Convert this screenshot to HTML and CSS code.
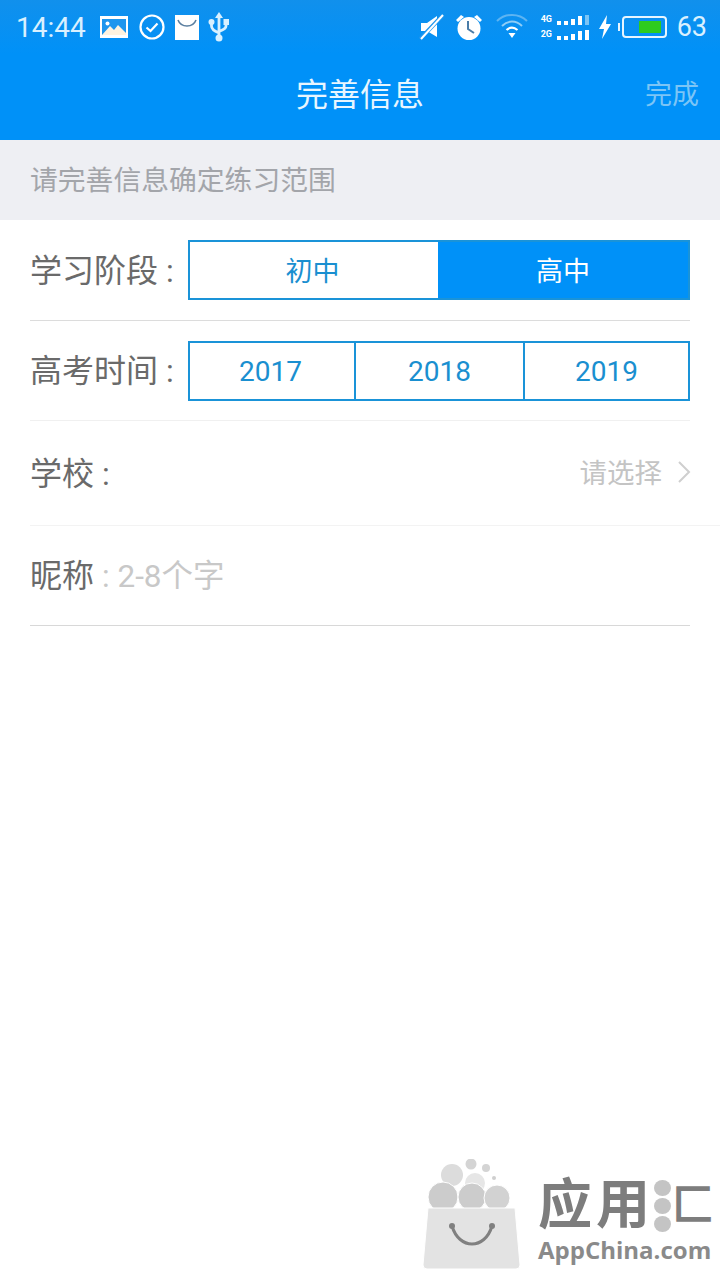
FILE: index.html
```html
<!DOCTYPE html>
<html lang="zh-CN">
<head>
    <meta charset="UTF-8">
    <meta name="viewport" content="width=device-width, initial-scale=1.0">
    <title>完善信息</title>
    <link rel="stylesheet" href="styles.css">
</head>
<body>

<div class="header">
    <!-- Status bar -->
    <div class="statusBar">
        <div class="statusLeft">
            <span class="clock">14:44</span>
            <svg class="iconPicture" width="28" height="22" viewBox="0 0 28 22">
                <rect width="28" height="22" fill="#fff"/>
                <rect x="2" y="3" width="24" height="16" fill="#1e96ee"/>
                <circle cx="7.5" cy="7.5" r="2" fill="#fff"/>
                <path d="M2 19 L10 10 L14 14 L18 9 L26 17 V19 Z" fill="#fff3e0"/>
            </svg>
            <svg class="iconCheck" width="26" height="26" viewBox="0 0 26 26">
                <circle cx="13" cy="13" r="11.5" fill="none" stroke="#fff" stroke-width="2.2"/>
                <path d="M7.5 13.5 L11.5 17 L18.5 9.5" fill="none" stroke="#fff" stroke-width="2.2"/>
            </svg>
            <svg class="iconMail" width="24" height="25" viewBox="0 0 24 25">
                <rect width="24" height="25" fill="#fff"/>
                <path d="M3 5 C6 13 18 13 21 5" fill="none" stroke="#5b7fa0" stroke-width="1.6"/>
            </svg>
            <svg class="iconUsb" width="22" height="30" viewBox="0 0 22 30">
                <path d="M11 0 L15 6 H7 Z" fill="#d8f0ff"/>
                <rect x="15.5" y="7" width="5.500" height="6" fill="#d8f0ff"/>
                <circle cx="3.500" cy="10" r="3" fill="#d8f0ff"/>
                <circle cx="11" cy="26" r="3.500" fill="#d8f0ff"/>
                <path d="M11 5 V25 M3.500 10 V14 Q3.500 18 11 21 M18 12 V14 Q18 17 11 19.500" fill="none" stroke="#d8f0ff" stroke-width="2.800"/>
            </svg>
        </div>
        <div class="statusRight">
            <svg class="iconMute" width="26" height="28" viewBox="0 0 26 28">
                <path d="M2 10 H8 L18 3 V24 L8 18 H2 Z" fill="#fff"/>
                <path d="M1 26 L24 2" stroke="#1e96ee" stroke-width="4"/>
                <path d="M2 26 L24 2" stroke="#fff" stroke-width="2"/>
            </svg>
            <svg class="iconAlarm" width="28" height="28" viewBox="0 0 28 28">
                <circle cx="14" cy="15.500" r="11.500" fill="#fff"/>
                <path d="M1 7 L6 2 L9 4 L3 9 Z M27 7 L22 2 L19 4 L25 9 Z" fill="#fff"/>
                <path d="M13 8 V16 L19 20" fill="none" stroke="#4a7ca8" stroke-width="2"/>
            </svg>
            <svg class="iconWifi" width="32" height="28" viewBox="0 0 32 28">
                <path d="M1 8 C9 0 23 0 31 8" fill="none" stroke="#5db4f2" stroke-width="2"/>
                <path d="M6 13 C12 7 20 7 26 13" fill="none" stroke="#8fcdf6" stroke-width="2"/>
                <path d="M10.500 17 C14 14 18 14 21.500 17" fill="none" stroke="#fff" stroke-width="2.200"/>
                <path d="M12.500 20 H19.500 L16 25 Z" fill="#fff"/>
            </svg>
            <div class="signal">
                <div class="signalRow">
                    <span class="signalLabel">4G</span>
                    <span class="bar bar1"></span><span class="bar bar1"></span><span class="bar bar2"></span><span class="bar bar3"></span><span class="bar bar4 barDim"></span>
                </div>
                <div class="signalRow">
                    <span class="signalLabel">2G</span>
                    <span class="bar bar1"></span><span class="bar bar1"></span><span class="bar bar2"></span><span class="bar bar3"></span><span class="bar bar4"></span>
                </div>
            </div>
            <svg class="iconBolt" width="14" height="24" viewBox="0 0 14 24">
                <path d="M9 0 L1 14 H6 L4 24 L13 9 H8 Z" fill="#fff"/>
            </svg>
            <div class="battery">
                <div class="batteryLevel"></div>
            </div>
            <span class="batteryText">63</span>
        </div>
    </div>

    <!-- Title bar -->
    <div class="titleBar">
        <span class="title">完善信息</span>
        <span class="done">完成</span>
    </div>
</div>

<div class="hint">请完善信息确定练习范围</div>

<div class="form">
    <div class="row rowStage">
        <span class="label">学习阶段 :</span>
        <div class="segments">
            <div class="segment segmentWide">初中</div>
            <div class="segment segmentWide segmentActive">高中</div>
        </div>
    </div>
    <div class="row rowYear">
        <span class="label">高考时间 :</span>
        <div class="segments">
            <div class="segment">2017</div>
            <div class="segment">2018</div>
            <div class="segment">2019</div>
        </div>
    </div>
    <div class="row rowSchool">
        <span class="label">学校 :</span>
        <span class="pick">请选择</span>
        <svg class="arrow" width="14" height="22" viewBox="0 0 14 22">
            <path d="M2 1 L12 11 L2 21" fill="none" stroke="#cfcfcf" stroke-width="2"/>
        </svg>
    </div>
    <div class="row rowName">
        <span class="label">昵称</span>
        <span class="placeholder">: 2-8个字</span>
    </div>
</div>

<!-- Watermark -->
<div class="watermark">
    <svg class="bag" width="102" height="112" viewBox="0 0 102 112">
        <circle cx="31" cy="16" r="11" fill="#dcdcdc"/>
        <circle cx="50" cy="5" r="5.500" fill="#d4d4d4"/>
        <circle cx="65" cy="9" r="4" fill="#d4d4d4"/>
        <circle cx="73" cy="19" r="2" fill="#cfcfcf"/>
        <circle cx="54" cy="24" r="10" fill="#e6e6e6"/>
        <circle cx="22" cy="38" r="15" fill="#cccccc" stroke="#fff"/>
        <circle cx="51" cy="38" r="14" fill="#cccccc" stroke="#fff"/>
        <circle cx="76" cy="39" r="13" fill="#d2d2d2" stroke="#fff"/>
        <path d="M7 49 H94 L99 106 Q99 110 95 110 H6 Q2 110 2 106 Z" fill="#e3e3e3" stroke="#fff"/>
        <path d="M31 67 C38 91 64 91 71 67" fill="none" stroke="#808080" stroke-width="3"/>
        <circle cx="31" cy="67" r="3" fill="#808080"/>
        <circle cx="71" cy="67" r="3" fill="#808080"/>
    </svg>
    <div class="brand">
        <div class="brandName">
            <span class="brandMain">应用</span>
            <span class="brandDots"><i></i><i></i><i></i></span>
            <span class="brandLast">匚</span>
        </div>
        <div class="brandLatin">AppChina.com</div>
    </div>
</div>

</body>
</html>
```

FILE: styles.css
```css
body {
    font-family: 'Roboto', 'Noto Sans CJK SC', sans-serif;
    margin: 0;
    width: 720px;
    height: 1280px;
    position: relative;
    overflow: hidden;
    background-color: #fff;
}

.header {
    height: 140px;
    background-color: #0091f8;
    color: #fff;
}

.statusBar {
    box-sizing: border-box;
    height: 54px;
    display: flex;
    justify-content: space-between;
    align-items: center;
    padding: 0 13px 0 16px;
    background: linear-gradient(#1190ec, #0091f8);
}

.statusLeft,
.statusRight {
    display: flex;
    align-items: center;
}

.clock {
    font-size: 28px;
    color: #d9f0ff;
    margin-right: 14px;
}

.iconCheck {
    margin-left: 11px;
}

.iconMail {
    margin-left: 10px;
}

.iconUsb {
    margin-left: 9px;
}

.iconAlarm {
    margin-left: 10px;
}

.iconWifi {
    margin-left: 13px;
}

.signal {
    margin-left: 13px;
    display: flex;
    flex-direction: column;
    gap: 4px;
}

.signalRow {
    display: flex;
    align-items: flex-end;
    height: 11px;
    gap: 3px;
}

.signalLabel {
    font-size: 9px;
    font-weight: 700;
    line-height: 11px;
    width: 13px;
    color: #fff;
}

.bar {
    width: 4px;
    background-color: #fff;
}

.bar1 {
    height: 4px;
}

.bar2 {
    height: 6px;
}

.bar3 {
    height: 9px;
}

.bar4 {
    height: 10px;
}

.barDim {
    background-color: #7cc4f5;
}

.iconBolt {
    margin-left: 9px;
}

.battery {
    margin-left: 10px;
    box-sizing: border-box;
    width: 45px;
    height: 22px;
    border: 2px solid #e6f5ff;
    border-radius: 4px;
    padding: 3px 4px 3px 15px;
    position: relative;
}

.battery::before {
    content: '';
    position: absolute;
    left: -6px;
    top: 5px;
    width: 2px;
    height: 8px;
    background-color: #e6f5ff;
}

.batteryLevel {
    height: 100%;
    background-color: #2ecb1f;
}

.batteryText {
    font-size: 27px;
    color: #d9f0ff;
    margin-left: 10px;
}

.titleBar {
    height: 86px;
    display: flex;
    align-items: center;
    justify-content: center;
    position: relative;
}

.title {
    font-size: 32px;
    margin-top: -10px;
    color: #e8f6ff;
}

.done {
    position: absolute;
    right: 21px;
    top: 23px;
    font-size: 27px;
    line-height: 36px;
    color: #7cc5f6;
}

.hint {
    height: 80px;
    line-height: 81px;
    background-color: #eeeff3;
    color: #a3a5aa;
    font-size: 27.8px;
    padding-left: 30px;
}

.form {
    padding-left: 30px;
}

.row {
    display: flex;
    align-items: center;
    margin-right: 30px;
    border-bottom: 1px solid #dcdcdc;
    box-sizing: border-box;
}

.rowStage {
    height: 101px;
}

.rowYear {
    height: 100px;
    border-bottom-color: #f0f0f0;
}

.rowSchool {
    height: 105px;
    margin-right: 0;
    padding-right: 29px;
    border-bottom-color: #f3f3f3;
}

.rowName {
    height: 100px;
    border-bottom-color: #d8d8d8;
}

.label {
    font-size: 32px;
    color: #6a6a6a;
    white-space: nowrap;
    margin-bottom: 5px;
}

.rowStage .label,
.rowYear .label {
    width: 158px;
}

.segments {
    flex: 1;
    display: flex;
    height: 60px;
    box-sizing: border-box;
    border: 2px solid #1a93d8;
}

.segment {
    flex: 1;
    display: flex;
    align-items: center;
    justify-content: center;
    font-size: 28px;
    color: #1a8fd0;
    border-left: 2px solid #1a93d8;
}

.segment:first-child {
    border-left: none;
}

.segmentWide {
    flex: none;
    box-sizing: border-box;
    width: 248px;
    font-size: 27px;
    border-left: none;
    padding-right: 3px;
    padding-bottom: 2px;
}

.segmentActive {
    width: 250px;
    background-color: #0091f8;
    color: #fff;
    padding-right: 0;
}

.rowYear .segment {
    padding-top: 2px;
}

.rowYear .segment:first-child {
    flex: none;
    width: 164px;
    padding-right: 3px;
    box-sizing: border-box;
}

.rowYear .segment:last-child {
    flex: none;
    width: 165px;
    box-sizing: border-box;
}

.pick {
    margin-left: auto;
    font-size: 27.5px;
    color: #c4c4c4;
    margin-bottom: 5px;
}

.arrow {
    margin-left: 15px;
    margin-bottom: 3px;
}

.placeholder {
    font-size: 31.5px;
    color: #c8c8c8;
    margin-left: 8px;
    margin-bottom: 5px;
}

.watermark {
    position: absolute;
    left: 421px;
    top: 1159px;
    display: flex;
}

.brand {
    margin-left: 15px;
    margin-top: 20px;
    color: #7d7d7d;
    white-space: nowrap;
}

.brandName {
    display: flex;
    align-items: center;
    height: 54px;
    font-size: 54px;
    font-weight: 700;
    line-height: 54px;
}

.brandMain {
    letter-spacing: 4px;
}

.brandDots {
    display: flex;
    flex-direction: column;
    gap: 2px;
}

.brandDots i {
    display: block;
    width: 17px;
    height: 16px;
    border-radius: 50%;
    background-color: #c4c4c4;
}

.brandLast {
    font-size: 42px;
    margin-left: 1px;
}

.brandLatin {
    font-family: 'Open Sans', sans-serif;
    font-size: 24px;
    font-weight: 700;
    line-height: 30px;
    margin-top: 2px;
    color: #8a8a8a;
}
```
